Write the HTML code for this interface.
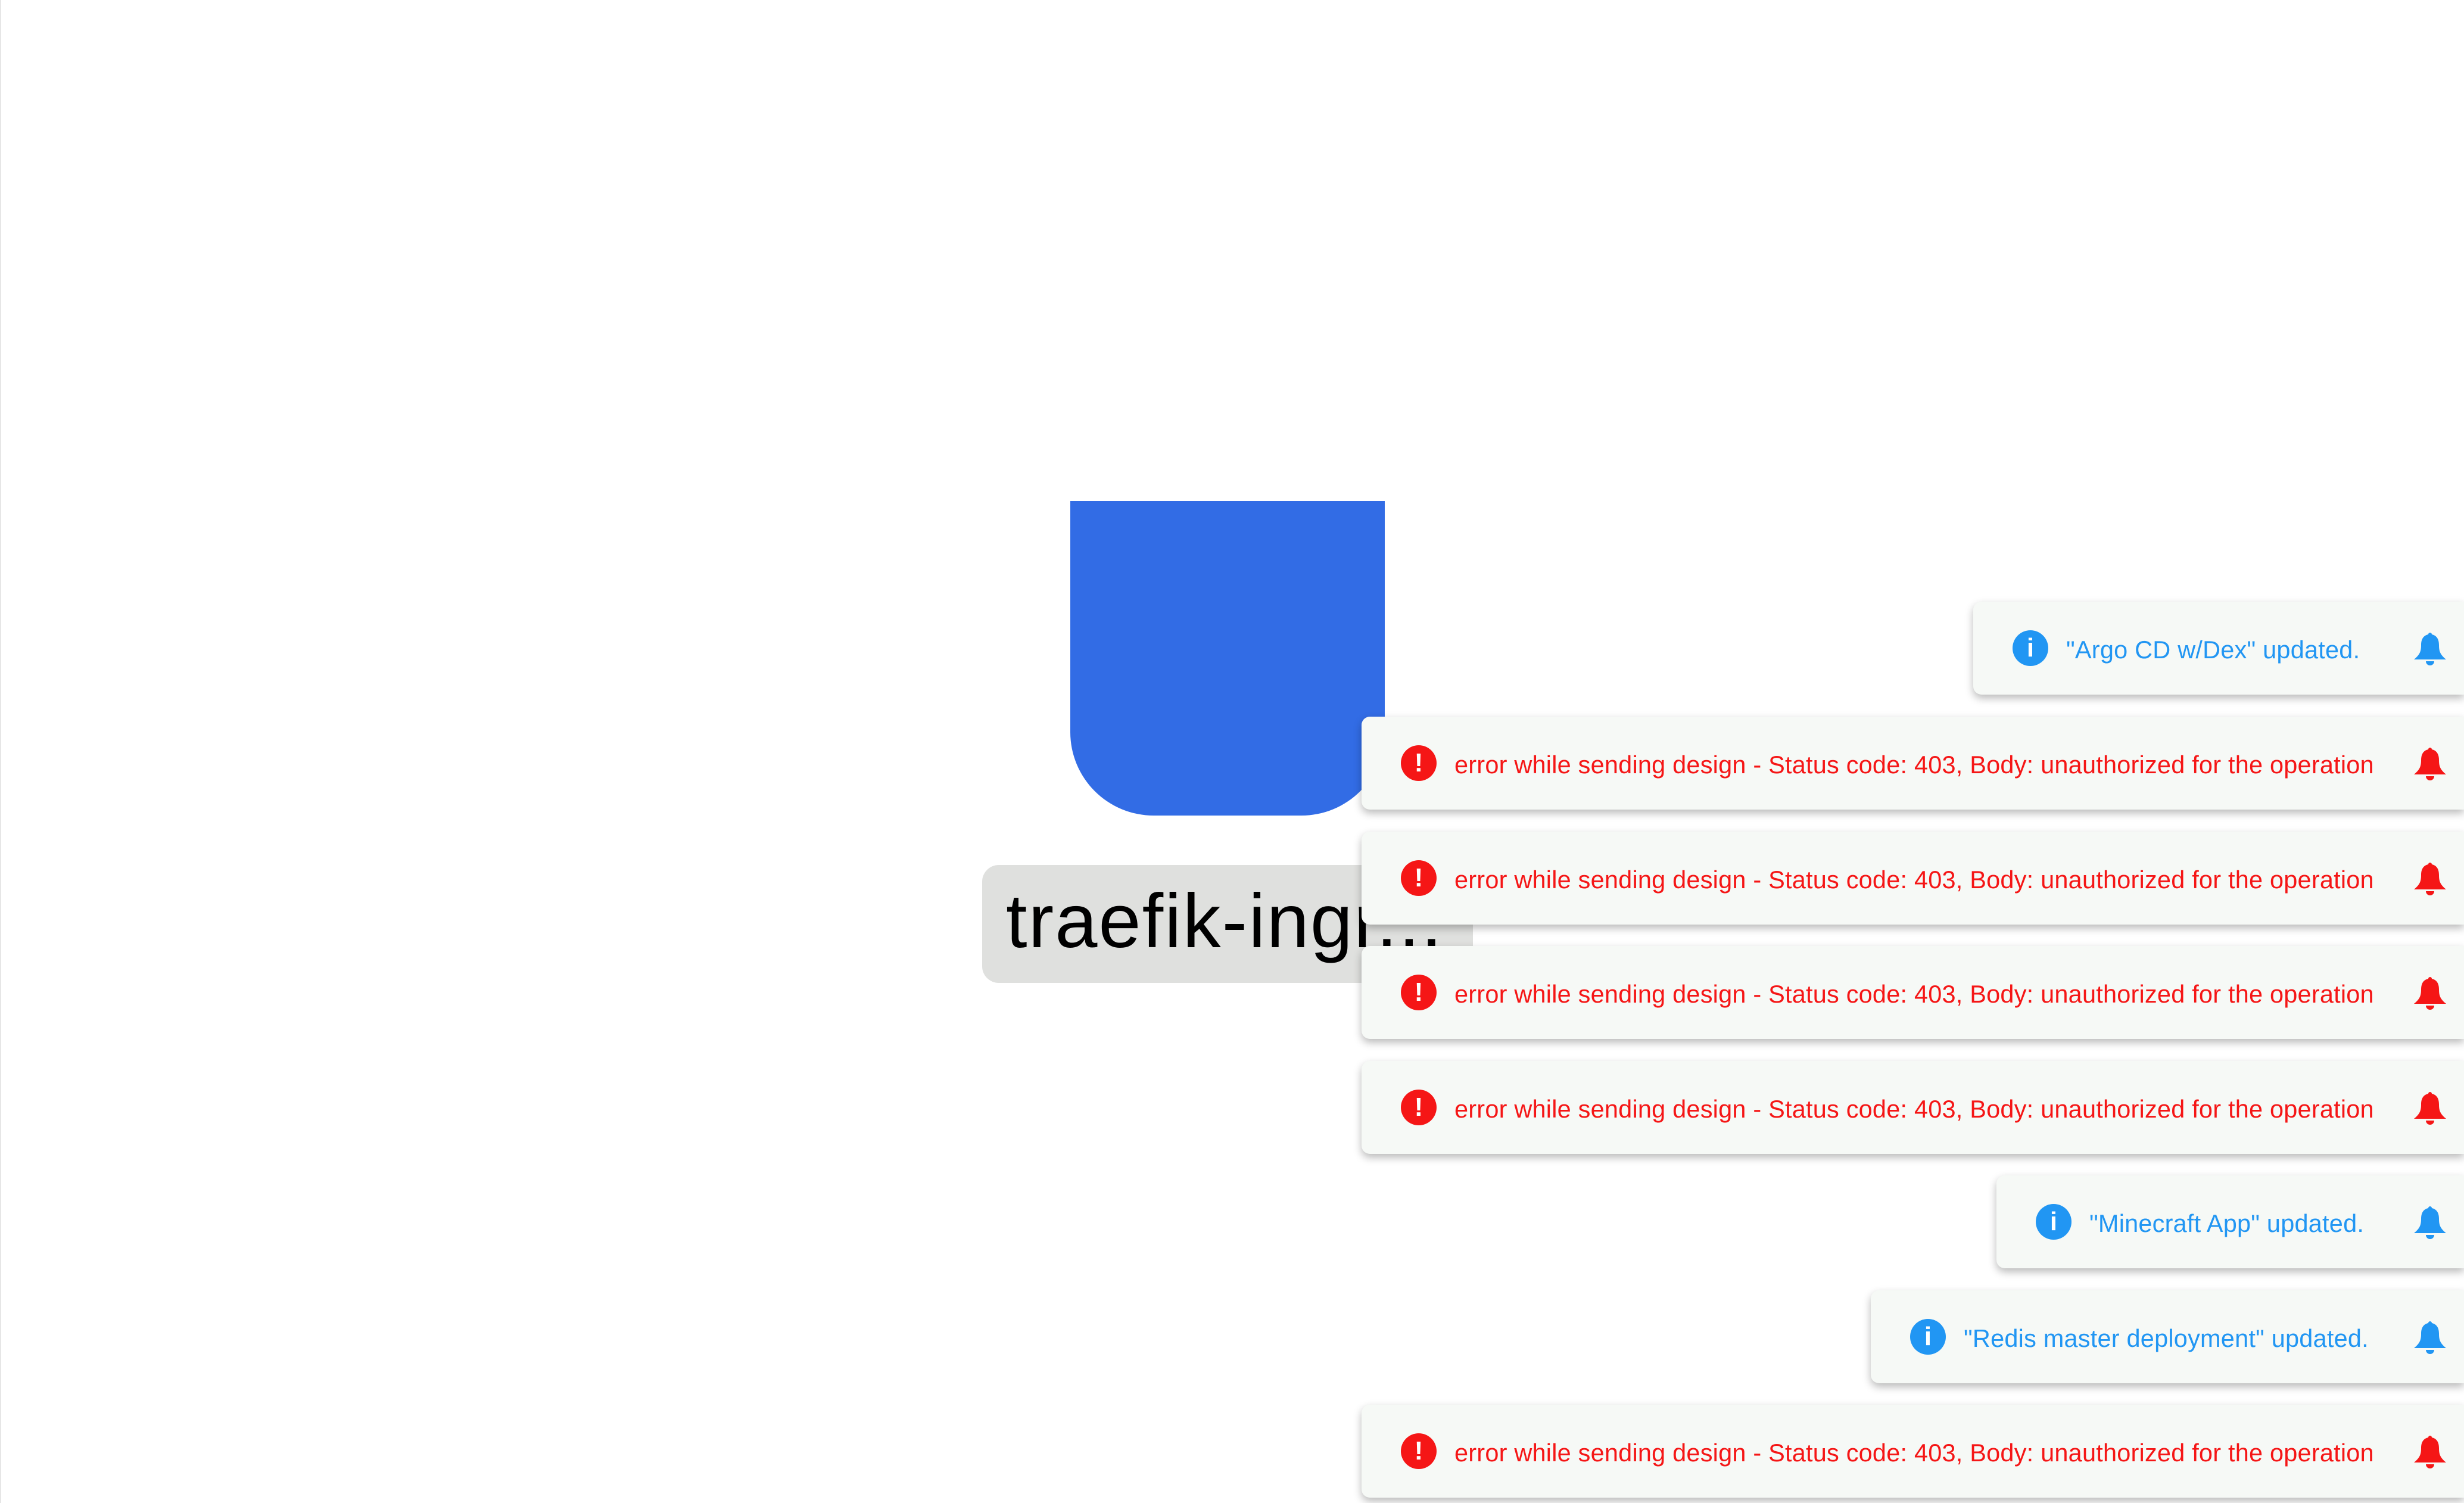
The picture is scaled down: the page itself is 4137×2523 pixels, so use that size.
<!DOCTYPE html>
<html><head><meta charset="utf-8"><style>
html,body{margin:0;padding:0}
body{width:4137px;height:2523px;position:relative;overflow:hidden;background:#fff;font-family:"Liberation Sans",sans-serif;border-left:2px solid #e6e6e6;box-sizing:border-box}
.box{position:absolute;left:1795px;top:841px;width:528px;height:528px;background:#326ce5;border-radius:0 0 140px 140px}
.lbl{position:absolute;left:1647px;top:1452px;width:824px;height:198px;background:#dfe0de;border-radius:28px;font-size:128px;line-height:190px;padding-left:40px;box-sizing:border-box;color:#000;white-space:nowrap;overflow:hidden;letter-spacing:2px}
.t{position:absolute;right:0;height:156px;background:#f6f9f6;border-radius:14px 0 0 14px;box-shadow:0 6px 14px rgba(0,0,0,.28)}
.t .ic{position:absolute;left:66px;top:48px;width:60px;height:60px;border-radius:50%;color:#fff;font-weight:bold;font-size:44px;line-height:60px;text-align:center}
.t .tx{position:absolute;left:156px;top:3px;line-height:156px;font-size:41.5px;letter-spacing:0.2px;white-space:nowrap}
.t svg{position:absolute;right:30px;top:52px}
.e .ic{background:#f51616}.e .tx{color:#f51616}
.i .ic{background:#2196f3}.i .tx{color:#2196f3}
</style></head><body>
<div class="box"></div>
<div class="lbl">traefik-ingr...</div>

<div class="t i" style="left:3311px;top:1010px"><div class="ic">i</div><div class="tx">"Argo CD w/Dex" updated.</div><svg width="54" height="56" viewBox="0 0 54 56"><path fill="#2196f3" d="M24 3a3 3 0 0 1 6 0c9 2 12 9 12 18 0 10 2 16 12 24H0c10-8 12-14 12-24 0-9 3-16 12-18z"/><path fill="#2196f3" d="M20 48h14a7 7 0 0 1-14 0z"/></svg></div>

<div class="t e" style="left:2284px;top:1203px"><div class="ic">!</div><div class="tx">error while sending design - Status code: 403, Body: unauthorized for the operation</div><svg width="54" height="56" viewBox="0 0 54 56"><path fill="#f51616" d="M24 3a3 3 0 0 1 6 0c9 2 12 9 12 18 0 10 2 16 12 24H0c10-8 12-14 12-24 0-9 3-16 12-18z"/><path fill="#f51616" d="M20 48h14a7 7 0 0 1-14 0z"/></svg></div>

<div class="t e" style="left:2284px;top:1396px"><div class="ic">!</div><div class="tx">error while sending design - Status code: 403, Body: unauthorized for the operation</div><svg width="54" height="56" viewBox="0 0 54 56"><path fill="#f51616" d="M24 3a3 3 0 0 1 6 0c9 2 12 9 12 18 0 10 2 16 12 24H0c10-8 12-14 12-24 0-9 3-16 12-18z"/><path fill="#f51616" d="M20 48h14a7 7 0 0 1-14 0z"/></svg></div>

<div class="t e" style="left:2284px;top:1588px"><div class="ic">!</div><div class="tx">error while sending design - Status code: 403, Body: unauthorized for the operation</div><svg width="54" height="56" viewBox="0 0 54 56"><path fill="#f51616" d="M24 3a3 3 0 0 1 6 0c9 2 12 9 12 18 0 10 2 16 12 24H0c10-8 12-14 12-24 0-9 3-16 12-18z"/><path fill="#f51616" d="M20 48h14a7 7 0 0 1-14 0z"/></svg></div>

<div class="t e" style="left:2284px;top:1781px"><div class="ic">!</div><div class="tx">error while sending design - Status code: 403, Body: unauthorized for the operation</div><svg width="54" height="56" viewBox="0 0 54 56"><path fill="#f51616" d="M24 3a3 3 0 0 1 6 0c9 2 12 9 12 18 0 10 2 16 12 24H0c10-8 12-14 12-24 0-9 3-16 12-18z"/><path fill="#f51616" d="M20 48h14a7 7 0 0 1-14 0z"/></svg></div>

<div class="t i" style="left:3350px;top:1973px"><div class="ic">i</div><div class="tx">"Minecraft App" updated.</div><svg width="54" height="56" viewBox="0 0 54 56"><path fill="#2196f3" d="M24 3a3 3 0 0 1 6 0c9 2 12 9 12 18 0 10 2 16 12 24H0c10-8 12-14 12-24 0-9 3-16 12-18z"/><path fill="#2196f3" d="M20 48h14a7 7 0 0 1-14 0z"/></svg></div>

<div class="t i" style="left:3139px;top:2166px"><div class="ic">i</div><div class="tx">"Redis master deployment" updated.</div><svg width="54" height="56" viewBox="0 0 54 56"><path fill="#2196f3" d="M24 3a3 3 0 0 1 6 0c9 2 12 9 12 18 0 10 2 16 12 24H0c10-8 12-14 12-24 0-9 3-16 12-18z"/><path fill="#2196f3" d="M20 48h14a7 7 0 0 1-14 0z"/></svg></div>

<div class="t e" style="left:2284px;top:2358px"><div class="ic">!</div><div class="tx">error while sending design - Status code: 403, Body: unauthorized for the operation</div><svg width="54" height="56" viewBox="0 0 54 56"><path fill="#f51616" d="M24 3a3 3 0 0 1 6 0c9 2 12 9 12 18 0 10 2 16 12 24H0c10-8 12-14 12-24 0-9 3-16 12-18z"/><path fill="#f51616" d="M20 48h14a7 7 0 0 1-14 0z"/></svg></div>
</body></html>
